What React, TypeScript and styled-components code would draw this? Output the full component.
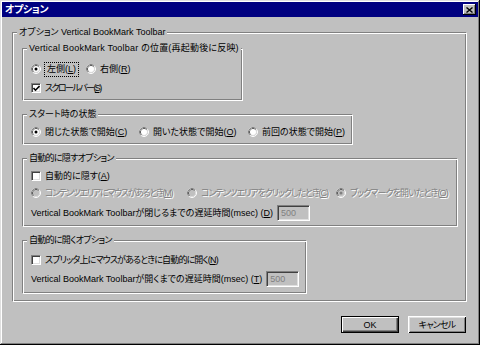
import React from "react";
import styled, { createGlobalStyle } from "styled-components";

const Global = createGlobalStyle`
  html, body { margin: 0; padding: 0; background: #c0c0c0; }
  * { box-sizing: border-box; }
`;

const Window = styled.div`
  width: 480px;
  height: 345px;
  padding: 2px;
  background: #c0c0c0;
  box-shadow: inset -1px -1px 0 #000, inset 1px 1px 0 #dfdfdf,
    inset -2px -2px 0 #808080, inset 2px 2px 0 #fff;
  display: flex;
  flex-direction: column;
  font-family: "Liberation Sans", "Noto Sans CJK JP", sans-serif;
  font-size: 9px;
  line-height: 13px;
  color: #000;
  font-feature-settings: "palt";
`;

const TitleBar = styled.div`
  height: 15px;
  background: #000080;
  display: flex;
  align-items: center;
  justify-content: space-between;
  padding: 0 2px 0 3px;
  flex: none;
`;

const Title = styled.span`
  color: #fff;
  font-weight: bold;
  font-size: 10px;
  line-height: 15px;
  letter-spacing: -0.4px;
`;

const CloseButton = styled.span`
  width: 13px;
  height: 11px;
  background: #c0c0c0;
  box-shadow: inset -1px -1px 0 #000, inset 1px 1px 0 #fff,
    inset -2px -2px 0 #808080;
  display: flex;
  align-items: center;
  justify-content: center;
`;

const Content = styled.div`
  display: flex;
  flex-direction: column;
  padding: 9px 11px 0 10px;
`;

const GroupBox = styled.fieldset<{ $w: number; $pad: string; $indent: number }>`
  margin: 0;
  min-width: 0;
  width: ${(p) => p.$w}px;
  padding: ${(p) => p.$pad};
  padding-left: ${(p) => p.$indent}px;
  border: 1px solid;
  border-color: #808080 #fff #fff #808080;
  box-shadow: inset 1px 1px 0 #fff, inset -1px -1px 0 #808080;
  display: flex;
  flex-direction: column;
  & > legend {
    margin-left: ${(p) => 4 - p.$indent}px;
  }
`;

const Legend = styled.legend<{ $ls?: number }>`
  padding: 0 2px;
  line-height: 13px;
  height: 13px;
  background: #c0c0c0;
  white-space: nowrap;
  letter-spacing: ${(p) => p.$ls ?? 0}px;
`;

const Stack = styled.div`
  display: flex;
  flex-direction: column;
  gap: 7px;
`;

const Row = styled.div<{ $mt?: number }>`
  display: flex;
  align-items: center;
  height: 16px;
  margin-top: ${(p) => p.$mt ?? 0}px;
  white-space: nowrap;
`;

const Option = styled.label<{ $w?: number; $disabled?: boolean }>`
  display: inline-flex;
  align-items: center;
  gap: 4px;
  flex: none;
  height: 16px;
  width: ${(p) => (p.$w ? `${p.$w}px` : "auto")};
  color: ${(p) => (p.$disabled ? "#808080" : "#000")};
  text-shadow: ${(p) => (p.$disabled ? "1px 1px 0 #fff" : "none")};
`;

const Text = styled.span<{ $ls?: number }>`
  letter-spacing: ${(p) => p.$ls ?? 0}px;
`;

const FocusText = styled.span`
  outline: 1px dotted #000;
  outline-offset: 0;
  padding: 0 2px;
  line-height: 13px;
`;

const Box = styled.span<{ $disabled?: boolean }>`
  width: 10px;
  height: 10px;
  flex: none;
  background: ${(p) => (p.$disabled ? "#c0c0c0" : "#fff")};
  border: 1px solid;
  border-color: #808080 #fff #fff #808080;
  box-shadow: inset 1px 1px 0 #404040, inset -1px -1px 0 #dfdfdf;
  display: inline-flex;
  align-items: center;
  justify-content: center;
`;

const FieldLabel = styled.span`
  flex: none;
`;

const NumberBox = styled.input`
  width: 33px;
  height: 16px;
  margin: 0 0 0 4px;
  padding: 0 0 0 3px;
  background: #c0c0c0;
  border: 1px solid;
  border-color: #808080 #fff #fff #808080;
  box-shadow: inset 1px 1px 0 #404040, inset -1px -1px 0 #dfdfdf;
  font-family: "Liberation Sans", sans-serif;
  font-size: 9px;
  color: #808080;
  -webkit-text-fill-color: #808080;
  opacity: 1;
  outline: none;
`;

const ButtonRow = styled.div`
  display: flex;
  justify-content: flex-end;
  gap: 9px;
  margin-top: 14px;
  padding-right: 1px;
`;

const Button = styled.button<{ $default?: boolean }>`
  width: 58px;
  height: 17px;
  padding: 0;
  margin: 0;
  background: #c0c0c0;
  font-family: "Liberation Sans", "Noto Sans CJK JP", sans-serif;
  font-size: 9px;
  font-feature-settings: "palt";
  color: #000;
  border: ${(p) => (p.$default ? "1px solid #000" : "none")};
  box-shadow: ${(p) =>
    p.$default
      ? "inset 1px 1px 0 #fff, inset -1px -1px 0 #404040, inset -2px -2px 0 #808080"
      : "inset 1px 1px 0 #fff, inset -1px -1px 0 #000, inset 2px 2px 0 #dfdfdf, inset -2px -2px 0 #808080"};
`;

function Radio({ checked, disabled }: { checked?: boolean; disabled?: boolean }) {
  return (
    <svg width="10" height="10" viewBox="0 0 10 10">
      <circle cx="5" cy="5" r="4.5" fill="none" stroke="#fff" strokeWidth="1" />
      <path d="M1.82 8.18 A4.5 4.5 0 0 1 8.18 1.82" fill="none" stroke="#808080" strokeWidth="1" />
      <circle cx="5" cy="5" r="3.5" fill="none" stroke="#dfdfdf" strokeWidth="1" />
      <path d="M2.53 7.47 A3.5 3.5 0 0 1 7.47 2.53" fill="none" stroke="#404040" strokeWidth="1" />
      <circle cx="5" cy="5" r="3" fill={disabled ? "#c0c0c0" : "#fff"} />
      {checked && <circle cx="5" cy="5" r="1.5" fill={disabled ? "#808080" : "#000"} />}
    </svg>
  );
}

function Check({ checked, disabled }: { checked?: boolean; disabled?: boolean }) {
  return (
    <Box $disabled={disabled}>
      {checked && (
        <svg width="7" height="7" viewBox="0 0 7 7">
          <polyline points="0.5,3 2.5,5.2 6.5,1" fill="none" stroke="#000" strokeWidth="1.6" />
        </svg>
      )}
    </Box>
  );
}

const Acc = ({ k }: { k: string }) => (
  <>
    (<u>{k}</u>)
  </>
);

export default function App() {
  return (
    <>
      <Global />
      <Window>
        <TitleBar>
          <Title>オプション</Title>
          <CloseButton>
            <svg width="7" height="6" viewBox="0 0 7 6">
              <path d="M0.5 0.5 L6.5 5.5 M6.5 0.5 L0.5 5.5" stroke="#000" strokeWidth="1.4" />
            </svg>
          </CloseButton>
        </TitleBar>
        <Content>
          <GroupBox $w={455} $pad="3px 0 7px" $indent={9}>
            <Legend>オプション Vertical BookMark Toolbar</Legend>
            <Stack>
              <GroupBox $w={221} $pad="6px 0 4px" $indent={8}>
                <Legend $ls={0.2}>Vertical BookMark Toolbar の位置(再起動後に反映)</Legend>
                <Row>
                  <Option $w={55}>
                    <Radio checked />
                    <FocusText>
                      左側<Acc k="L" />
                    </FocusText>
                  </Option>
                  <Option>
                    <Radio />
                    <Text>
                      右側<Acc k="R" />
                    </Text>
                  </Option>
                </Row>
                <Row $mt={3}>
                  <Option>
                    <Check checked />
                    <Text $ls={-1.6}>
                      スクロールバー<Acc k="S" />
                    </Text>
                  </Option>
                </Row>
              </GroupBox>

              <GroupBox $w={331} $pad="3px 0 4px" $indent={8}>
                <Legend>スタート時の状態</Legend>
                <Row>
                  <Option $w={108}>
                    <Radio checked />
                    <Text>
                      閉じた状態で開始<Acc k="C" />
                    </Text>
                  </Option>
                  <Option $w={109}>
                    <Radio />
                    <Text>
                      開いた状態で開始<Acc k="O" />
                    </Text>
                  </Option>
                  <Option>
                    <Radio />
                    <Text>
                      前回の状態で開始<Acc k="P" />
                    </Text>
                  </Option>
                </Row>
              </GroupBox>

              <GroupBox $w={436} $pad="3px 0 5px" $indent={8}>
                <Legend $ls={-0.7}>自動的に隠すオプション</Legend>
                <Row>
                  <Option>
                    <Check />
                    <Text>
                      自動的に隠す<Acc k="A" />
                    </Text>
                  </Option>
                </Row>
                <Row $mt={1}>
                  <Option $w={156} $disabled>
                    <Radio disabled />
                    <Text $ls={-1.3}>
                      コンテンツエリアにマウスがあるとき<Acc k="M" />
                    </Text>
                  </Option>
                  <Option $w={149} $disabled>
                    <Radio disabled />
                    <Text $ls={-1.1}>
                      コンテンツエリアをクリックしたとき<Acc k="C" />
                    </Text>
                  </Option>
                  <Option $disabled>
                    <Radio checked disabled />
                    <Text $ls={-0.9}>
                      ブックマークを開いたとき<Acc k="O" />
                    </Text>
                  </Option>
                </Row>
                <Row $mt={4}>
                  <FieldLabel>
                    Vertical BookMark Toolbarが閉じるまでの遅延時間(msec) <Acc k="D" />
                  </FieldLabel>
                  <NumberBox disabled value="500" readOnly />
                </Row>
              </GroupBox>

              <GroupBox $w={285} $pad="5px 0 6px" $indent={8}>
                <Legend $ls={-0.7}>自動的に開くオプション</Legend>
                <Row>
                  <Option>
                    <Check />
                    <Text $ls={-0.85}>
                      スプリッタ上にマウスがあるときに自動的に開く<Acc k="N" />
                    </Text>
                  </Option>
                </Row>
                <Row $mt={3}>
                  <FieldLabel>
                    Vertical BookMark Toolbarが開くまでの遅延時間(msec) <Acc k="T" />
                  </FieldLabel>
                  <NumberBox disabled value="500" readOnly />
                </Row>
              </GroupBox>
            </Stack>
          </GroupBox>
          <ButtonRow>
            <Button $default>OK</Button>
            <Button>
              <Text $ls={-0.8}>キャンセル</Text>
            </Button>
          </ButtonRow>
        </Content>
      </Window>
    </>
  );
}
